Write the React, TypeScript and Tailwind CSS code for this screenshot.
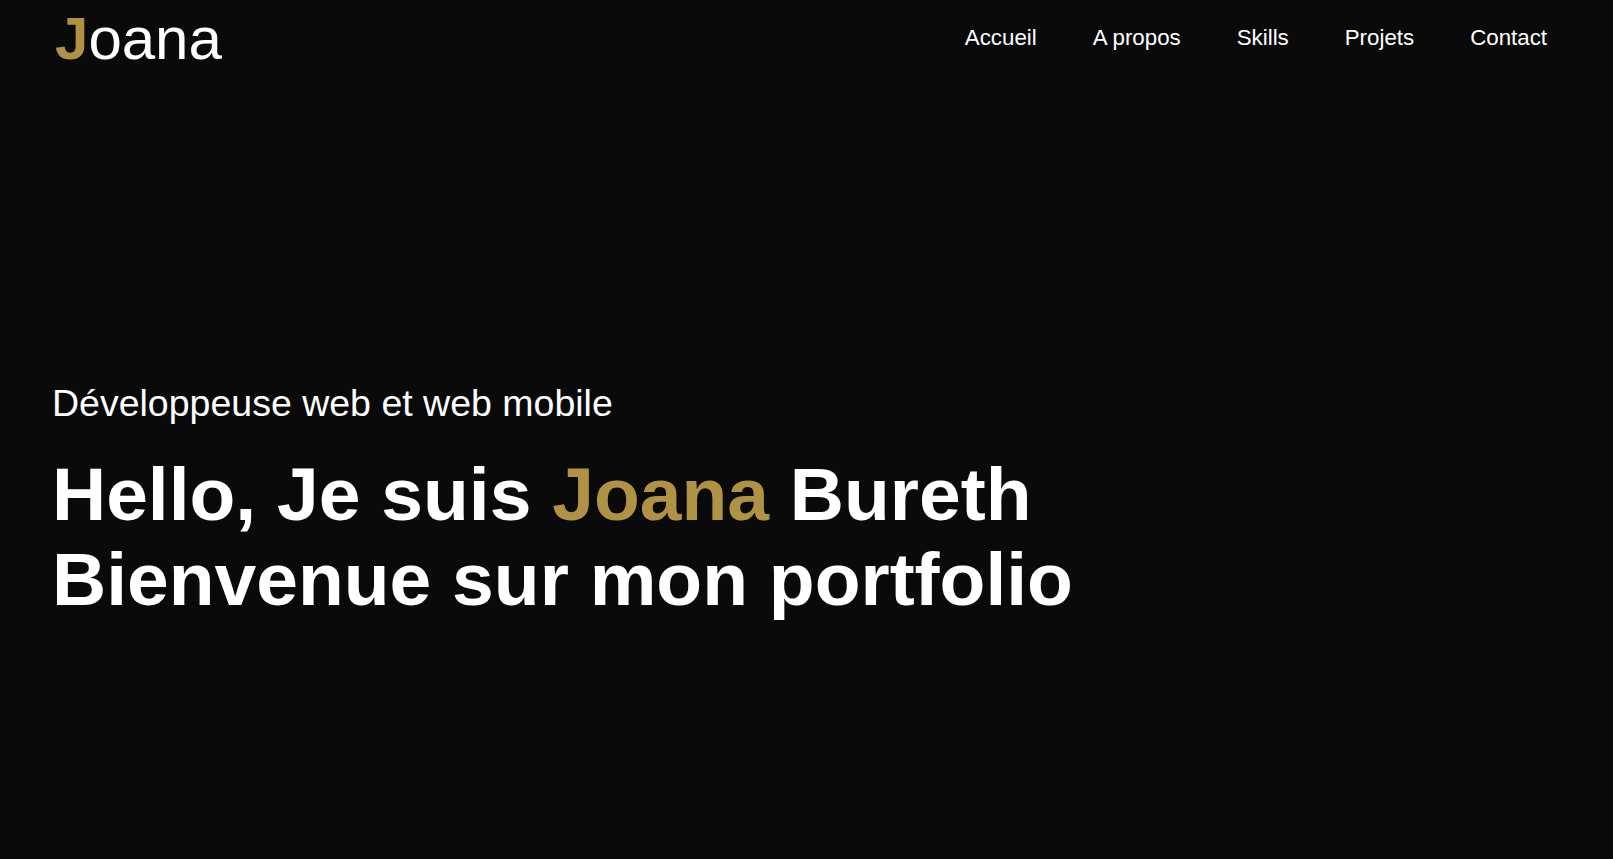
import React from "react";

export default function App() {
  const links = ["Accueil", "A propos", "Skills", "Projets", "Contact"];
  return (
    <div
      className="min-h-screen w-full bg-[#0a0a0a] text-white"
      style={{ fontFamily: '"Liberation Sans", Arial, sans-serif' }}
    >
      <header className="flex items-start justify-between pl-[55px] pr-[66px] pt-[5px]">
        <div className="text-[60px] leading-[1.149] font-normal">
          <span className="font-bold text-[#b09244]">J</span>oana
        </div>
        <nav className="mt-[20px] flex gap-[56px] text-[22.3px] leading-[1.149]">
          {links.map((l) => (
            <a key={l} href="#" className="text-white">
              {l}
            </a>
          ))}
        </nav>
      </header>
      <main className="pl-[52px] pt-[308px]">
        <p className="text-[37.5px] leading-[1.149]">Développeuse web et web mobile</p>
        <h1 className="mt-[27px] whitespace-nowrap text-[75px] font-bold leading-[85px]">
          Hello, Je suis <span className="text-[#b09244]">Joana</span> Bureth
          <br />
          Bienvenue sur mon portfolio
        </h1>
      </main>
    </div>
  );
}
